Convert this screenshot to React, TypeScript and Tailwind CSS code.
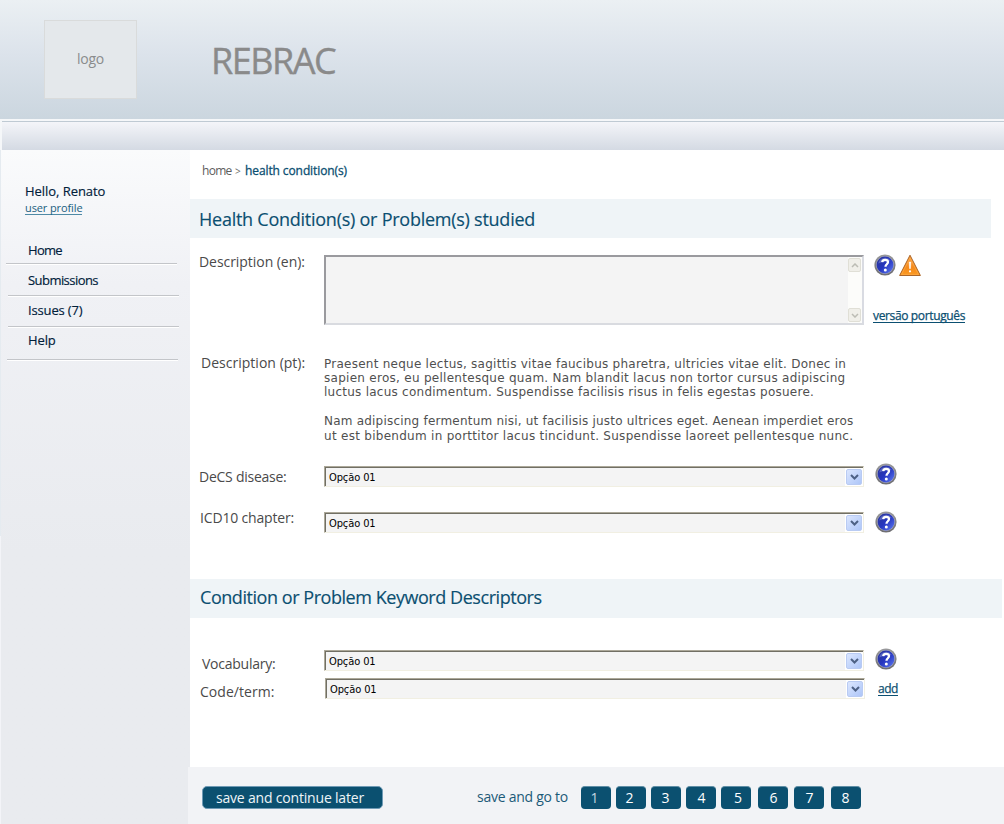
import type { ReactNode } from "react";

function HelpIcon({ className = "" }: { className?: string }) {
  return (
    <svg viewBox="0 0 22 22" className={`h-[22px] w-[22px] shrink-0 ${className}`} aria-label="Help">
      <defs>
        <linearGradient id="ring" x1="0" y1="0" x2="0" y2="1">
          <stop offset="0" stopColor="#9a9a9c" />
          <stop offset="1" stopColor="#6c6c70" />
        </linearGradient>
        <linearGradient id="ball" x1="0" y1="0" x2="1" y2="1">
          <stop offset="0" stopColor="#2b3592" />
          <stop offset="0.5" stopColor="#2636c0" />
          <stop offset="1" stopColor="#5f7cf4" />
        </linearGradient>
      </defs>
      <circle cx="11" cy="11" r="10.6" fill="url(#ring)" />
      <circle cx="11" cy="11" r="8.900" fill="#a9abc4" />
      <circle cx="11" cy="11" r="8.4" fill="url(#ball)" />
      <path d="M4.2 9.5a7 7 0 0 1 12.6-2.6C13 7.500 8 7.500 4.200 9.500z" fill="#7b88d8" opacity="0.55" />
      <path d="M8.200 8.100C8.500 6.400 9.700 5.800 11.100 5.800c1.700 0 2.900 0.900 2.900 2.300 0 2.200-2.500 2.200-2.500 4.700" fill="none" stroke="#fff" strokeWidth="2.300" />
      <circle cx="11.300" cy="16" r="1.500" fill="#fff" />
    </svg>
  );
}

function WarningIcon() {
  return (
    <svg viewBox="0 0 24 23" className="ml-[2px] mt-[16px] h-[23px] w-[24px] shrink-0" aria-label="Warning">
      <defs>
        <linearGradient id="warn" x1="0" y1="0" x2="0" y2="1">
          <stop offset="0" stopColor="#f9a44a" />
          <stop offset="0.6" stopColor="#f58a1c" />
          <stop offset="1" stopColor="#fb9a22" />
        </linearGradient>
      </defs>
      <path d="M12 1.200L22.400 21.500H1.600z" fill="url(#warn)" stroke="#a35a1c" strokeWidth="0.900" strokeLinejoin="round" />
      <path d="M12 4L20.500 20.400H3.500z" fill="none" stroke="#ffb04f" strokeWidth="0.600" />
      <path d="M11.200 8h1.600l-0.300 6.500h-1z" fill="#fff" stroke="#fff" strokeWidth="0.500" />
      <circle cx="12" cy="17.300" r="1.100" fill="#fff" />
    </svg>
  );
}

function Select({ className = "" }: { className?: string }) {
  return (
    <div
      className={`flex h-[21px] w-[540px] shrink-0 border-t border-l border-r border-b border-t-[#aca899] border-l-[#aca899] border-r-[#f1efe2] border-b-[#f1efe2] ${className}`}
    >
      <div className="flex flex-1 items-start justify-between border-t border-l border-[#716f64] bg-[#f4f4f4]">
        <span className="ml-[3px] font-['DejaVu_Sans_Condensed','DejaVu_Sans',sans-serif] text-[11px] leading-[19px] tracking-[-0.1px] text-black">
          Opção 01
        </span>
        <span className="h-[18px] w-[18px] bg-white p-px">
          <span className="flex h-4 w-4 items-center justify-center rounded-[2px] border border-[#b9cbf3] bg-linear-to-br from-[#dbe6fe] to-[#aec6f8]">
            <svg viewBox="0 0 9 6" className="h-[6px] w-[9px]">
              <path d="M1 1l3.500 3.500L8 1" fill="none" stroke="#4d6185" strokeWidth="2" />
            </svg>
          </span>
        </span>
      </div>
    </div>
  );
}

function ScrollButton({ up }: { up?: boolean }) {
  return (
    <span className="flex h-[14px] w-[13px] items-center justify-center rounded-[2px] border border-[#e0dfd6] bg-[#f0efe9]">
      <svg viewBox="0 0 8 5" className="h-[5px] w-2">
        <path d={up ? "M1 4l3-3 3 3" : "M1 1l3 3 3-3"} fill="none" stroke="#bcbcb4" strokeWidth="1.500" />
      </svg>
    </span>
  );
}

function Label({ className, children }: { className: string; children: ReactNode }) {
  return <label className={`w-[134px] shrink-0 whitespace-nowrap text-sm leading-5 text-[#4a4a4a] ${className}`}>{children}</label>;
}

function NavItem({ label, className, line }: { label: string; className: string; line: string }) {
  return (
    <li className={`flex flex-col whitespace-nowrap text-[13px] leading-5 text-[#00203a] ${className}`}>
      <a className="pl-[26px] [-webkit-text-stroke:0.150px]">{label}</a>
      <span className={`mt-auto h-[2px] w-[171px] border-b border-b-white bg-[#c3c5c9] ${line}`} />
    </li>
  );
}

const steps = [
  { n: 1, gap: "", text: "pr-[3px] pb-px text-[#c3d6e0]" },
  { n: 2, gap: "ml-[5px]", text: "pr-[3px] text-white" },
  { n: 3, gap: "ml-[5px]", text: "pr-px text-white" },
  { n: 4, gap: "ml-[5px]", text: "pl-px text-white" },
  { n: 5, gap: "ml-[5px]", text: "pl-[4px] text-white" },
  { n: 6, gap: "ml-[7px]", text: "pl-px text-white" },
  { n: 7, gap: "ml-[6px]", text: "pl-px text-white" },
  { n: 8, gap: "ml-[7px]", text: "pr-px text-white" },
];

export default function App() {
  return (
    <div className="flex h-[824px] w-[1004px] flex-col overflow-hidden bg-white font-['Open_Sans','Noto_Sans',sans-serif]">
      <header className="flex h-[119px] shrink-0 items-start bg-linear-to-b from-[#ebf0f3] via-[#dce3eb] via-45% to-[#cbd6df]">
        <div className="ml-[44px] mt-[20px] flex h-[79px] w-[93px] items-center justify-center border border-[#d9dbdb] bg-[#e4e8eb] pb-[2px] text-sm tracking-[-0.240px] text-[#8a8c8d]">
          logo
        </div>
        <h1 className="ml-[74px] mt-[36px] text-[36px] leading-[50px] tracking-[-1.500px] text-[#8a8a8a] [-webkit-text-stroke:0.400px]">REBRAC</h1>
      </header>
      <div className="h-[31px] shrink-0 bg-[#f5f7f9] pt-[2px] pl-[2px]">
        <div className="h-[29px] border-t border-[#bfcad3] bg-linear-to-b from-[#f4f5f9] to-[#d4dae3]" />
      </div>

      <div className="flex flex-1">
        <aside className="flex w-[190px] shrink-0">
          <div className="flex w-px flex-col">
            <div className="h-[386px] bg-[#e5ebf0]" />
            <div className="flex-1 bg-[#f3f4f8]" />
          </div>
          <div className="flex-1 bg-linear-to-b from-[#fafbfc] via-[#f0f1f5] via-20% to-[#e9ebef] to-60%">
            <p className="mt-[31px] pl-[24px] text-[13px] leading-5 tracking-[-0.050px] whitespace-nowrap text-[#00203a] [-webkit-text-stroke:0.150px]">Hello, Renato</p>
            <div className="flex pl-[24px]">
              <a className="h-[14px] border-b border-[#4f8aa5] text-[11px] leading-[14px] tracking-[-0.110px] text-[#1a6080]">user profile</a>
            </div>
            <ul className="mt-[25px]">
              <NavItem label="Home" className="h-[25px] pl-px tracking-[-0.690px]" line="ml-[4px]" />
              <NavItem label="Submissions" className="mt-[5px] h-[27px] pl-px tracking-[-0.550px]" line="ml-[6px]" />
              <NavItem label="Issues (7)" className="mt-[3px] h-[28px] pl-px tracking-[-0.150px]" line="ml-[6px]" />
              <NavItem label="Help" className="mt-[2px] h-[31px] pl-px tracking-[-0.100px]" line="ml-[5px]" />
            </ul>
          </div>
        </aside>

        <main className="flex flex-1 flex-col">
          <nav className="flex h-[49px] pt-[11px] pl-[12px] text-xs leading-5 whitespace-nowrap">
            <span className="w-[33px] tracking-[-0.700px] text-[#5c5c5c]">home</span>
            <span className="w-[10px] text-[10px] text-[#6b6b6b]">&gt;</span>
            <span className="tracking-[-0.100px] text-[#0b4f71] [-webkit-text-stroke:0.300px]">health condition(s)</span>
          </nav>

          <div className="mr-[13px] flex h-[39px] items-center bg-[#eff4f7] pt-px pl-[9px]">
            <h2 className="text-lg leading-6 tracking-[-0.250px] text-[#0b4f71] [-webkit-text-stroke:0.150px]">Health Condition(s) or Problem(s) studied</h2>
          </div>

          <div className="flex h-[106px] items-start">
            <Label className="pt-[14px] pl-[9px] tracking-[-0.050px]">Description (en):</Label>
            <div className="mt-[17px] flex h-[70px] w-[540px] shrink-0 justify-end border-t-2 border-l-2 border-r-2 border-b-2 border-t-[#9a9a9e] border-l-[#9a9a9e] border-r-[#d9dbe2] border-b-[#d9dbe0] bg-[#f4f4f4]">
              <div className="flex w-[14px] flex-col justify-between bg-[#fcfcfa] py-px">
                <ScrollButton up />
                <ScrollButton />
              </div>
            </div>
            <div className="ml-[9px] flex flex-col items-start">
              <div className="flex">
                <HelpIcon className="ml-[1px] mt-[16px]" />
                <WarningIcon />
              </div>
              <a className="mt-[31px] h-[15px] border-b border-[#0b4f71] text-xs leading-[15px] whitespace-nowrap tracking-[-0.360px] text-[#0b4f71] [-webkit-text-stroke:0.250px]">
                versão português
              </a>
            </div>
          </div>

          <div className="flex h-[108px] items-start">
            <Label className="pt-[9px] pl-[11px] tracking-[0.020px]">Description (pt):</Label>
            <div className="flex flex-col pt-[13px] font-['DejaVu_Sans',sans-serif] text-xs whitespace-nowrap text-[#505050]">
              <p className="flex flex-col leading-[14px]">
                <span className="tracking-[0.250px]">Praesent neque lectus, sagittis vitae faucibus pharetra, ultricies vitae elit. Donec in</span>
                <span className="tracking-[0.280px]">sapien eros, eu pellentesque quam. Nam blandit lacus non tortor cursus adipiscing</span>
                <span className="tracking-[0.250px]">luctus lacus condimentum. Suspendisse facilisis risus in felis egestas posuere.</span>
              </p>
              <p className="mt-[15px] flex flex-col leading-[15px]">
                <span className="tracking-[0.210px]">Nam adipiscing fermentum nisi, ut facilisis justo ultrices eget. Aenean imperdiet eros</span>
                <span className="tracking-[0.280px]">ut est bibendum in porttitor lacus tincidunt. Suspendisse laoreet pellentesque nunc.</span>
              </p>
            </div>
          </div>

          <div className="flex h-[47px] items-start">
            <Label className="pt-[15px] pl-[9px] tracking-[-0.250px]">DeCS disease:</Label>
            <Select className="mt-[14px]" />
            <HelpIcon className="mt-[11px] ml-[11px]" />
          </div>
          <div className="flex h-[80px] items-start">
            <Label className="pt-[9px] pl-[10px] tracking-[-0.170px]">ICD10 chapter:</Label>
            <Select className="mt-[13px]" />
            <HelpIcon className="mt-[12px] ml-[11px]" />
          </div>

          <div className="mr-[2px] flex h-[39px] items-start bg-[#eff4f7] pt-[6px] pl-[10px]">
            <h2 className="text-lg leading-6 tracking-[-0.450px] text-[#0b4f71] [-webkit-text-stroke:0.150px]">Condition or Problem Keyword Descriptors</h2>
          </div>

          <div className="flex h-[56px] items-start">
            <Label className="pt-[36px] pl-[12px] tracking-[-0.250px]">Vocabulary:</Label>
            <Select className="mt-[32px]" />
            <HelpIcon className="mt-[30px] ml-[11px]" />
          </div>
          <div className="flex h-[93px] items-start">
            <Label className="pt-[8px] pl-[10px] tracking-[0.050px]">Code/term:</Label>
            <Select className="mt-[4px] ml-px" />
            <a className="mt-[7px] ml-[13px] h-[15px] border-b border-[#0b4f71] text-xs leading-[15px] tracking-[-0.450px] text-[#0b4f71] [-webkit-text-stroke:0.250px]">add</a>
          </div>

          <footer className="-ml-[2px] flex h-[57px] items-start bg-[#f2f3f6] pt-[19px] text-sm leading-5 whitespace-nowrap">
            <button className="ml-[14px] flex h-[23px] w-[181px] items-center rounded-[5px] border border-[#6f9ab5] bg-[#0b5070] pl-[13px] tracking-[-0.190px] text-[#eef5f8]">
              save and continue later
            </button>
            <span className="ml-[94px] w-[104px] pt-px tracking-[-0.260px] text-[#1c5a78]">save and go to</span>
            {steps.map((s) => (
              <button
                key={s.n}
                className={`flex h-[23px] w-[30px] items-center justify-center rounded-[4px] border-t border-[#5f8ea6] bg-[#0b5070] ${s.gap} ${s.text}`}
              >
                {s.n}
              </button>
            ))}
          </footer>
        </main>
      </div>
    </div>
  );
}
